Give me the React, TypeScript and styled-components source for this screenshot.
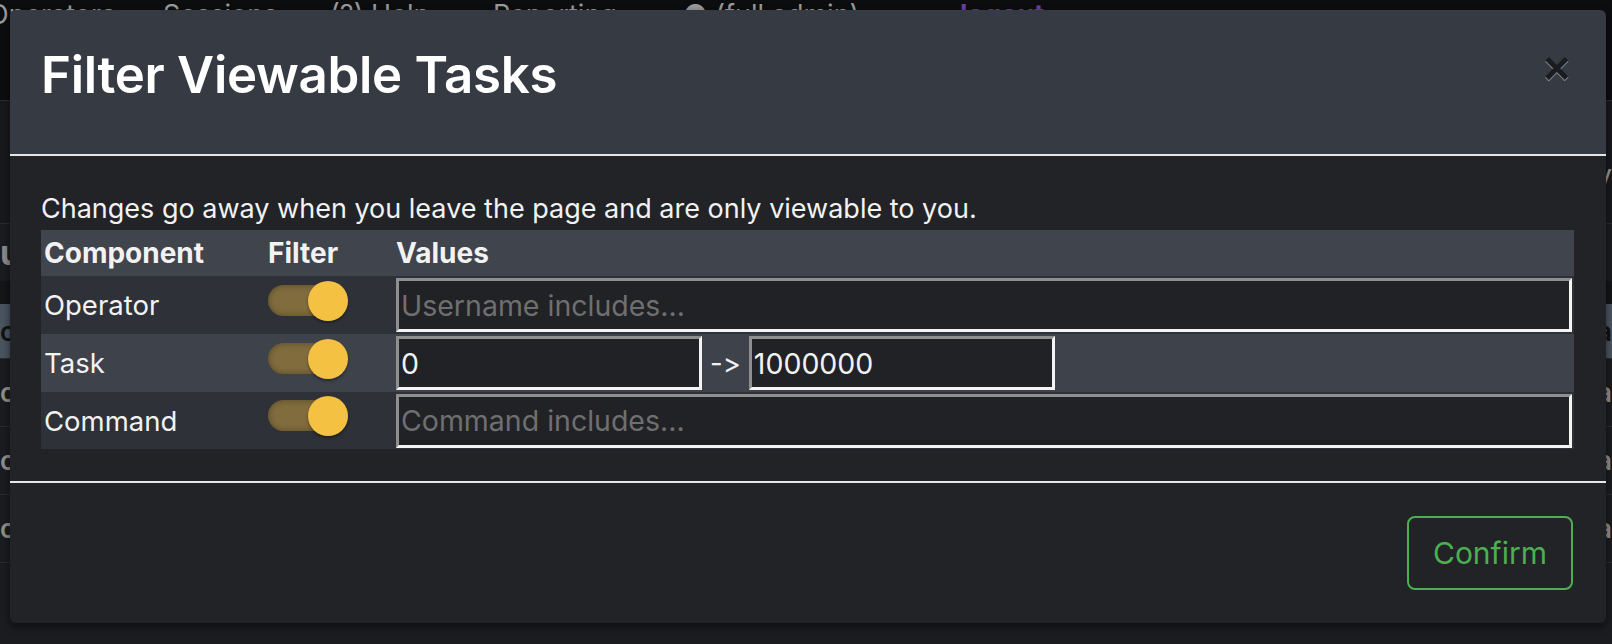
import React from "react";
import styled, { createGlobalStyle } from "styled-components";

const GlobalStyle = createGlobalStyle`
  html, body { margin: 0; padding: 0; background: #1b1c1f; }
  body { font-family: Inter, "Noto Sans", sans-serif; overflow: hidden; }
  * { box-sizing: border-box; }
`;

const Page = styled.div`
  position: relative;
  width: 1612px;
  height: 644px;
  overflow: hidden;
  background: #1b1c1f;
`;

/* ---------- background page (mostly hidden behind modal) ---------- */
const Backdrop = styled.div`
  display: flex;
  flex-direction: column;
  color: #9b9b9b;
`;

const BgNav = styled.div`
  height: 100px;
  background: #0c0d0f;
  display: grid;
  grid-template-columns: 175px 167px 163px 190px 277px auto;
  margin-left: -12px;
  padding-top: 1px;
  font-size: 27px;
  line-height: 1;
`;

const NavItem = styled.span<{ $accent?: boolean }>`
  white-space: nowrap;
  color: ${(p) => (p.$accent ? "#6a3fa8" : "#9b9b9b")};
  font-weight: ${(p) => (p.$accent ? 700 : 400)};
`;

const BgToolbar = styled.div`
  height: 124px;
  background: #18191c;
  border-top: 1px solid #2a2b2f;
  border-bottom: 1px solid #2a2b2f;
  display: flex;
  align-items: center;
  justify-content: flex-end;
  padding-top: 34px;
  font-size: 27px;
`;

const BgHeading = styled.div`
  height: 57px;
  display: flex;
  align-items: center;
  font-size: 34px;
  font-weight: 700;
  color: #8c8c8c;
`;

const BgBand = styled.div`
  height: 23px;
  background: #141517;
`;

const BgRow = styled.div<{ $hl?: boolean }>`
  height: ${(p) => (p.$hl ? 55 : 68)}px;
  background: ${(p) => (p.$hl ? "#4a5562" : "#1b1c1f")};
  border-bottom: 1px solid #2a2b2f;
  display: flex;
  align-items: center;
  justify-content: space-between;
  font-size: 26px;
  font-weight: 600;
  color: ${(p) => (p.$hl ? "#111" : "#8f8f8f")};
`;

/* ---------- modal ---------- */
const Overlay = styled.div`
  position: absolute;
  inset: 0;
  padding: 10px 6px 21px 10px;
  display: flex;
`;

const Modal = styled.div`
  flex: 1;
  background: #222327;
  border-radius: 6px;
  box-shadow: 0 3px 8px rgba(0, 0, 0, 0.55);
  display: flex;
  flex-direction: column;
  overflow: hidden;
  color: #f2f2f2;
`;

const Header = styled.div`
  height: 146px;
  flex: none;
  background: #363a42;
  border-bottom: 2px solid #e6e6e6;
  display: flex;
  align-items: center;
  justify-content: space-between;
  padding: 0 36px 16px 31px;
`;

const Title = styled.h2`
  margin: 0;
  font-size: 51px;
  font-weight: 600;
  line-height: normal;
  letter-spacing: -0.3px;
  color: #ffffff;
`;

const CloseButton = styled.button`
  background: none;
  border: none;
  padding: 0;
  margin-top: -12px;
  font-family: "Liberation Sans", Arial, sans-serif;
  font-size: 46px;
  font-weight: 700;
  line-height: 1;
  color: #000;
  text-shadow: 0 1px 0 #fff;
  opacity: 0.5;
  cursor: pointer;
`;

const Body = styled.div`
  flex: none;
  padding: 32px 32px 32px 31px;
  border-bottom: 2px solid #e6e6e6;
`;

const Note = styled.p`
  margin: 0;
  font-size: 27px;
  line-height: 42px;
`;

const Table = styled.div`
  display: flex;
  flex-direction: column;
`;

const TRow = styled.div<{ $tone: "head" | "light" | "dark"; $h: number }>`
  display: grid;
  grid-template-columns: 224px 128px 1fr;
  align-items: center;
  height: ${(p) => p.$h}px;
  background: ${(p) =>
    p.$tone === "dark" ? "#2e3137" : p.$tone === "head" ? "#40444c" : "#3e424a"};
`;

const Cell = styled.div<{ $bold?: boolean }>`
  padding: 0 2px 0 3px;
  display: flex;
  align-items: center;
  gap: 8px;
  font-size: ${(p) => (p.$bold ? 28 : 27.5)}px;
  font-weight: ${(p) => (p.$bold ? 700 : 400)};
  white-space: nowrap;
`;

const Switch = styled.span`
  position: relative;
  width: 82px;
  height: 40px;
  margin-top: -9px;
  flex: none;
`;

const Track = styled.span`
  position: absolute;
  left: 0;
  top: 4px;
  width: 74px;
  height: 31px;
  border-radius: 16px;
  background: #806c3d;
  box-shadow: inset 0 0 6px rgba(0, 0, 0, 0.35);
`;

const Knob = styled.span`
  position: absolute;
  left: 40px;
  top: 0;
  width: 40px;
  height: 40px;
  border-radius: 50%;
  background: #f4c142;
  box-shadow: 0 2px 3px rgba(0, 0, 0, 0.35);
`;

const TextInput = styled.input<{ $w?: number }>`
  width: ${(p) => (p.$w ? `${p.$w}px` : "100%")};
  height: 54px;
  flex: none;
  background: #212226;
  color: #f2f2f2;
  border: 3px solid;
  border-color: #8f8f8f #f4f4f4 #f4f4f4 #8f8f8f;
  font-family: inherit;
  font-size: 28.5px;
  padding: 0 2px;
  outline: none;
  &::placeholder {
    color: #6f6f6f;
  }
`;

const Arrow = styled.span`
  font-variant-ligatures: none;
  font-feature-settings: "calt" 0;
`;

const Footer = styled.div`
  flex: 1;
  display: flex;
  align-items: center;
  justify-content: flex-end;
  padding: 0 33px 0 31px;
`;

const ConfirmButton = styled.button`
  width: 166px;
  height: 74px;
  background: transparent;
  border: 2px solid #4caf50;
  border-radius: 8px;
  color: #4caf50;
  font-family: inherit;
  font-size: 30px;
  cursor: pointer;
`;

function Toggle() {
  return (
    <Switch>
      <Track />
      <Knob />
    </Switch>
  );
}

export default function App() {
  return (
    <>
      <GlobalStyle />
      <Page>
        <Backdrop>
          <BgNav>
            <NavItem>Operators</NavItem>
            <NavItem>Sessions</NavItem>
            <NavItem>(?) Help</NavItem>
            <NavItem>Reporting</NavItem>
            <NavItem>● (full admin)</NavItem>
            <NavItem $accent>logout</NavItem>
          </BgNav>
          <BgToolbar>V</BgToolbar>
          <BgHeading>u</BgHeading>
          <BgBand />
          <BgRow $hl>
            <span>c</span>
            <span>a</span>
          </BgRow>
          <BgRow>
            <span>c</span>
            <span>a</span>
          </BgRow>
          <BgRow>
            <span>c</span>
            <span>a</span>
          </BgRow>
          <BgRow>
            <span>c</span>
            <span>a</span>
          </BgRow>
        </Backdrop>

        <Overlay>
          <Modal>
            <Header>
              <Title>Filter Viewable Tasks</Title>
              <CloseButton aria-label="Close">×</CloseButton>
            </Header>
            <Body>
              <Note>Changes go away when you leave the page and are only viewable to you.</Note>
              <Table>
                <TRow $tone="head" $h={46}>
                  <Cell $bold>Component</Cell>
                  <Cell $bold>Filter</Cell>
                  <Cell $bold>Values</Cell>
                </TRow>
                <TRow $tone="dark" $h={58}>
                  <Cell>Operator</Cell>
                  <Cell>
                    <Toggle />
                  </Cell>
                  <Cell>
                    <TextInput placeholder="Username includes..." />
                  </Cell>
                </TRow>
                <TRow $tone="light" $h={58}>
                  <Cell>Task</Cell>
                  <Cell>
                    <Toggle />
                  </Cell>
                  <Cell>
                    <TextInput $w={306} defaultValue="0" />
                    <Arrow>-&gt;</Arrow>
                    <TextInput $w={306} defaultValue="1000000" />
                  </Cell>
                </TRow>
                <TRow $tone="dark" $h={57}>
                  <Cell>Command</Cell>
                  <Cell>
                    <Toggle />
                  </Cell>
                  <Cell>
                    <TextInput placeholder="Command includes..." />
                  </Cell>
                </TRow>
              </Table>
            </Body>
            <Footer>
              <ConfirmButton>Confirm</ConfirmButton>
            </Footer>
          </Modal>
        </Overlay>
      </Page>
    </>
  );
}
